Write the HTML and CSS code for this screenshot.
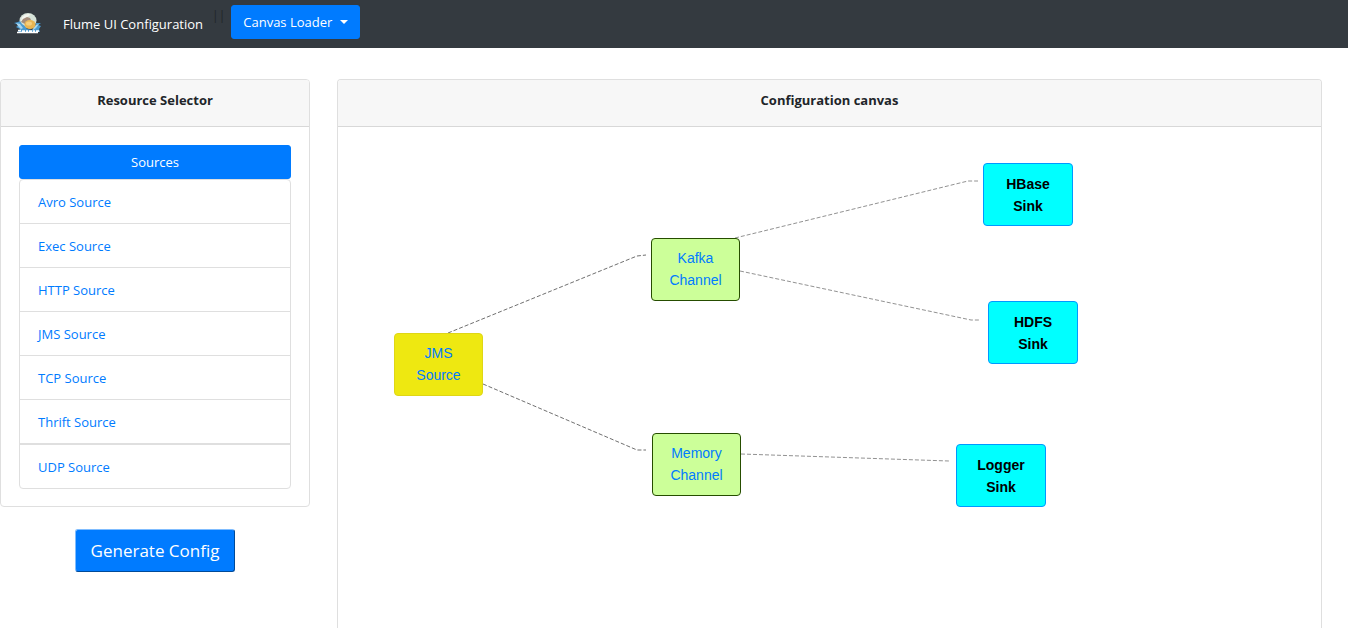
FILE: index.html
```html
<!DOCTYPE html>
<html lang="en">
<head>
<meta charset="utf-8">
<title>Flume UI Configuration</title>
<link rel="stylesheet" href="styles.css">
</head>
<body>
<header class="navbar">
  <a class="logo" href="#" aria-label="Flume">
    <svg width="28" height="22" viewBox="0 0 28 22" aria-hidden="true">
      <ellipse cx="14" cy="8.500" rx="8.500" ry="7.500" fill="#d5e2d8"/>
      <path d="M8 5Q12 1 17 2.500L12 6 9 10 7 9z" fill="#f4f5ee"/>
      <path d="M7 10 9 7 13 5 16 6 17 8 13 9 11 12z" fill="#a58c7a"/>
      <path d="M0 11 4 10 6 9 8 12 11 14 13 17 18 18 21 15 22 11 27 11 24 13 27 14 25 17 26 20 4 20 6 17 2 15 5 13z" fill="#4a9ad0"/>
      <path d="M2 11 6 12 9 16 7 17 4 14zM22 13 25 12 22 16 18 19 20 15z" fill="#a9d6ee"/>
      <ellipse cx="16" cy="12.500" rx="5.500" ry="4.500" fill="#e8b552"/>
      <ellipse cx="15" cy="11.500" rx="3" ry="2" fill="#f6cf7d"/>
      <path d="M4 18.500h3M8 19h3M12 19h2M15 19h3M19 19h2M22 19h3M3 20.500h21" stroke="#fff" stroke-width="1.500"/>
    </svg>
  </a>
  <a class="brand" href="#">Flume UI Configuration</a>
  <span class="divider">||</span>
  <button class="btn loader" type="button">Canvas Loader<span class="caret"></span></button>
</header>
<main class="layout">
  <aside class="sidebar">
    <section class="card">
      <h2 class="card-header">Resource Selector</h2>
      <div class="card-body">
        <button class="btn sources" type="button">Sources</button>
        <ul class="list">
          <li><a href="#">Avro Source</a></li>
          <li><a href="#">Exec Source</a></li>
          <li><a href="#">HTTP Source</a></li>
          <li><a href="#">JMS Source</a></li>
          <li><a href="#">TCP Source</a></li>
          <li><a href="#">Thrift Source</a></li>
          <li class="last"><a href="#">UDP Source</a></li>
        </ul>
      </div>
    </section>
    <button class="btn generate" type="button">Generate Config</button>
  </aside>
  <section class="card canvas-card">
    <h2 class="card-header">Configuration canvas</h2>
    <div class="canvas">
      <svg class="links" aria-hidden="true">
        <path class="strong" d="M110 206 299 129 308 128"/>
        <path class="strong" d="M145 257 299 323 308 323"/>
        <path d="M397 111 630 54 640 54"/>
        <path d="M402 144 633 193 642 193"/>
        <path d="M403 327 611 334"/>
      </svg>
      <a class="node source jms" href="#">JMS<br>Source</a>
      <a class="node channel kafka" href="#">Kafka<br>Channel</a>
      <a class="node channel memory" href="#">Memory<br>Channel</a>
      <div class="node sink hbase">HBase<br>Sink</div>
      <div class="node sink hdfs">HDFS<br>Sink</div>
      <div class="node sink logger">Logger<br>Sink</div>
    </div>
  </section>
</main>
</body>
</html>
```

FILE: styles.css
```css
* { box-sizing: border-box; }
body {
  display: flex;
  flex-direction: column;
  min-height: 100vh;
  margin: 0;
  background: #fff;
  color: #212529;
  font: 13px/22px "Open Sans", "Noto Sans", sans-serif;
}
a { color: #007bff; text-decoration: none; }
.navbar {
  display: flex;
  align-items: flex-start;
  height: 48px;
  padding: 5px 14px;
  background: #343a40;
}
.logo { display: flex; padding-top: 7px; }
.brand { margin-left: 21px; padding-top: 8px; color: #fff; white-space: nowrap; }
.divider { padding: 0 6px 0 9px; font-size: 12px; }
.btn {
  border: 1px solid #007bff;
  border-radius: 3px;
  background: #007bff;
  color: #fff;
  font: inherit;
  text-align: center;
  cursor: pointer;
}
.loader {
  display: flex;
  align-items: center;
  height: 34px;
  padding: 0 11px;
  white-space: nowrap;
}
.caret {
  margin-left: 8px;
  border: 4px solid transparent;
  border-top-color: #fff;
  border-bottom: 0;
}
.layout {
  display: grid;
  flex: 1;
  grid-template-columns: 23vw 1fr;
  column-gap: 2vw;
  padding: 31px 26px 0 0;
}
.sidebar { display: flex; flex-direction: column; align-items: center; gap: 22px; }
.card { width: 100%; border: 1px solid #dfdfdf; border-radius: 4px; }
.canvas-card {
  display: flex;
  flex-direction: column;
  border-bottom: 0;
  border-radius: 4px 4px 0 0;
}
.card-header {
  height: 47px;
  margin: 0;
  padding-top: 9px;
  border-bottom: 1px solid #d8d8d8;
  border-radius: 3px 3px 0 0;
  background: #f7f7f7;
  font-size: 13px;
  font-weight: 700;
  text-align: center;
}
.card-body { padding: 18px 18px 17px; }
.sources { display: block; width: 100%; height: 34px; }
.list {
  margin: 0;
  padding: 0;
  border: 1px solid #dfdfdf;
  border-radius: 4px;
  list-style: none;
}
.list li { padding: 11px 18px 10px; }
.list li + li { border-top: 1px solid #dfdfdf; }
.list li.last { border-top-width: 2px; }
.generate {
  height: 43px;
  padding: 0 15px;
  border-color: #80bdff #004a99 #004a99 #80bdff;
  font-size: 17px;
}
.canvas { position: relative; flex: 1; min-height: 420px; }
.links { position: absolute; width: 100%; height: 100%; }
.links path { fill: none; stroke: #929292; stroke-dasharray: 4 2; }
.links .strong { stroke: #707070; }
.node {
  position: absolute;
  height: 63px;
  border: 1px solid;
  border-radius: 4px;
  font: 14px/22px "Liberation Sans", Arial, sans-serif;
  text-align: center;
}
.source, .channel { width: 89px; padding-top: 8px; }
.source { border-color: #dfd616; background: #eee811; }
.channel { border-color: #264d00; background: #ccff99; }
.sink {
  width: 90px;
  padding-top: 9px;
  border-color: #0099ff;
  background: #00ffff;
  color: #000;
  font-weight: 700;
}
.jms { left: 56px; top: 206px; }
.kafka { left: 313px; top: 111px; }
.memory { left: 314px; top: 306px; }
.hbase { left: 645px; top: 36px; }
.hdfs { left: 650px; top: 174px; }
.logger { left: 618px; top: 317px; }
```
